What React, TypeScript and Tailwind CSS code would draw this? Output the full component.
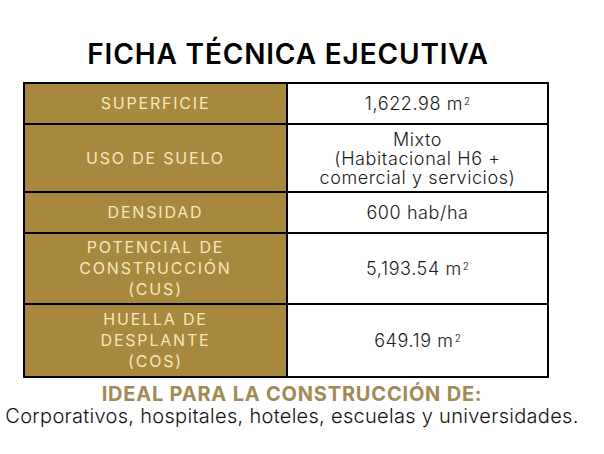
import React from "react";

const Sup = () => <sup className="text-[10px] relative -top-[5px] ml-[1px] tracking-normal">2</sup>;

const rows: { label: string[]; value: React.ReactNode; h: string }[] = [
  { label: ["SUPERFICIE"], value: <span>1,622.98 m<Sup /></span>, h: "h-[41px]" },
  {
    label: ["USO DE SUELO"],
    value: (
      <span className="block leading-[19px]">
        Mixto
        <br />
        (Habitacional H6 +
        <br />
        comercial y servicios)
      </span>
    ),
    h: "h-[68px]",
  },
  { label: ["DENSIDAD"], value: <span>600 hab/ha</span>, h: "h-[41px]" },
  {
    label: ["POTENCIAL DE", "CONSTRUCCIÓN", "(CUS)"],
    value: <span>5,193.54 m<Sup /></span>,
    h: "h-[71px]",
  },
  {
    label: ["HUELLA DE", "DESPLANTE", "(COS)"],
    value: <span>649.19 m<Sup /></span>,
    h: "h-[71px]",
  },
];

export default function App() {
  return (
    <div
      className="w-[604px] h-[454px] bg-white flex flex-col"
      style={{ fontFamily: "Inter, 'Noto Sans', sans-serif" }}
    >
      <div className="w-[576px] text-center pt-[36px] text-[28px] font-semibold text-black leading-[36px] tracking-[0.85px]">
        FICHA TÉCNICA EJECUTIVA
      </div>
      <div className="ml-[23px] mt-[10px] w-[526px] border-2 border-black flex flex-col">
        {rows.map((r, i) => (
          <div
            key={i}
            className={`flex ${r.h} ${i < rows.length - 1 ? "border-b-2 border-black" : ""}`}
          >
            <div className="w-[263px] bg-[#a8873f] border-r-2 border-black flex flex-col items-center justify-center text-[#f6e7bd] text-[16px] tracking-[1.8px] leading-[21px]">
              {r.label.map((l, j) => (
                <span key={j}>{l}</span>
              ))}
            </div>
            <div className="flex-1 flex items-center justify-center text-center text-[#1a1a1a] text-[18px] font-light tracking-[0.6px] leading-[20px]">
              {r.value}
            </div>
          </div>
        ))}
      </div>
      <div className="w-[584px] text-center mt-[5px]">
        <div className="text-[20px] font-bold text-[#a18a55] leading-[22px] tracking-[0.8px]">
          IDEAL PARA LA CONSTRUCCIÓN DE:
        </div>
        <div className="text-[20px] font-light text-[#111] leading-[22px] tracking-[0.3px]">
          Corporativos, hospitales, hoteles, escuelas y universidades.
        </div>
      </div>
    </div>
  );
}
